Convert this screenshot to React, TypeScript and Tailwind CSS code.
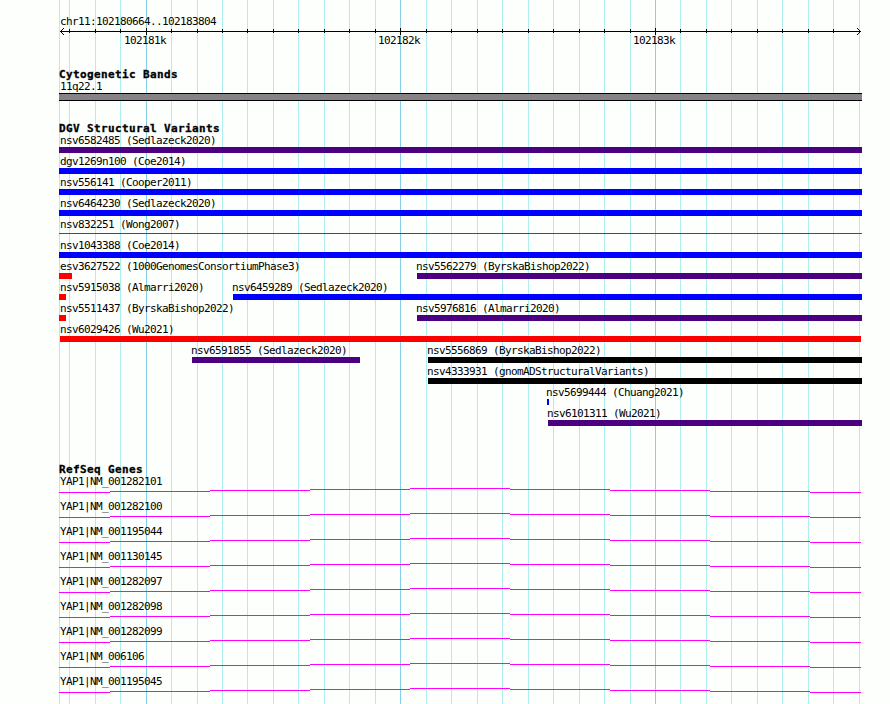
import React from "react";

const MINOR = [
  59, 69, 95, 120, 171, 197, 222, 247, 273, 298, 324, 349, 375, 426, 451, 477,
  502, 528, 553, 579, 604, 630, 680, 706, 731, 757, 782, 808, 833, 859,
];
const MAJOR = [146, 400, 655];

type Variant = { name: string; start: number; end: number; color: string; thin?: boolean };

const PURPLE = "bg-[#4b0082]";
const BLUE = "bg-[#0000ff]";
const RED = "bg-[#ff0000]";
const BLACK = "bg-[#000000]";

const ROWS: Variant[][] = [
  [{ name: "nsv6582485 (Sedlazeck2020)", start: 59, end: 862, color: PURPLE }],
  [{ name: "dgv1269n100 (Coe2014)", start: 59, end: 862, color: BLUE }],
  [{ name: "nsv556141 (Cooper2011)", start: 59, end: 862, color: BLUE }],
  [{ name: "nsv6464230 (Sedlazeck2020)", start: 59, end: 862, color: BLUE }],
  [{ name: "nsv832251 (Wong2007)", start: 59, end: 862, color: RED, thin: true }],
  [{ name: "nsv1043388 (Coe2014)", start: 59, end: 862, color: BLUE }],
  [
    { name: "esv3627522 (1000GenomesConsortiumPhase3)", start: 59, end: 72, color: RED },
    { name: "nsv5562279 (ByrskaBishop2022)", start: 417, end: 862, color: PURPLE },
  ],
  [
    { name: "nsv5915038 (Almarri2020)", start: 59, end: 66, color: RED },
    { name: "nsv6459289 (Sedlazeck2020)", start: 233, end: 862, color: BLUE },
  ],
  [
    { name: "nsv5511437 (ByrskaBishop2022)", start: 59, end: 66, color: RED },
    { name: "nsv5976816 (Almarri2020)", start: 417, end: 862, color: PURPLE },
  ],
  [{ name: "nsv6029426 (Wu2021)", start: 60, end: 861, color: RED }],
  [
    { name: "nsv6591855 (Sedlazeck2020)", start: 192, end: 360, color: PURPLE },
    { name: "nsv5556869 (ByrskaBishop2022)", start: 428, end: 862, color: BLACK },
  ],
  [{ name: "nsv4333931 (gnomADStructuralVariants)", start: 428, end: 862, color: BLACK }],
  [{ name: "nsv5699444 (Chuang2021)", start: 547, end: 549, color: BLUE }],
  [{ name: "nsv6101311 (Wu2021)", start: 548, end: 862, color: PURPLE }],
];

const GENES = [
  "NM_001282101", "NM_001282100", "NM_001195044", "NM_001130145", "NM_001282097",
  "NM_001282098", "NM_001282099", "NM_006106", "NM_001195045",
];

// Intron line: x start, x end, height above the base line
const INTRON = [
  [59, 110, 0], [110, 210, 1], [210, 310, 2], [310, 410, 3], [410, 510, 4],
  [510, 610, 3], [610, 710, 2], [710, 810, 1], [810, 861, 0],
];

function Grid() {
  return (
    <svg className="absolute inset-0" width="890" height="704" shapeRendering="crispEdges">
      {MINOR.map((x) => <rect key={x} x={x} y="0" width="1" height="704" fill="#afeeee" />)}
      {MAJOR.map((x) => <rect key={x} x={x} y="0" width="1" height="704" fill="#87ceeb" />)}
    </svg>
  );
}

function Axis() {
  return (
    <svg className="block h-[6px] overflow-visible" width="890" height="6" shapeRendering="crispEdges">
      <rect x="60" y="3" width="801" height="1" />
      {MINOR.slice(1, -1).map((x) => <rect key={x} x={x} y="1" width="1" height="4" />)}
      {MAJOR.map((x) => <rect key={x} x={x} y="0" width="1" height="7" />)}
      {[1, 2, 3].map((d) => (
        <g key={d}>
          <rect x={60 + d} y={3 - d} width="1" height="1" />
          <rect x={60 + d} y={3 + d} width="1" height="1" />
          <rect x={860 - d} y={3 - d} width="1" height="1" />
          <rect x={860 - d} y={3 + d} width="1" height="1" />
        </g>
      ))}
    </svg>
  );
}

function Title({ children }: { children: React.ReactNode }) {
  return (
    <h2 className="ml-[59px] h-3 text-[11px] leading-[13px] font-bold tracking-[0.38px] [-webkit-text-stroke:0.3px_black]">
      {children}
    </h2>
  );
}

function VariantRow({ items }: { items: Variant[] }) {
  // Each cell starts one pixel left of its bar, where its label begins.
  const origin = (v: Variant) => v.start - 1;
  return (
    <div className="flex h-[21px]">
      {items.map((v, i) => {
        const from = i === 0 ? 0 : origin(v);
        const to = items[i + 1] ? origin(items[i + 1]) : 890;
        return (
          <div key={v.name} className="shrink-0" style={{ width: to - from }}>
            <div className="h-[13px]" style={{ paddingLeft: Math.max(60, origin(v)) - from }}>
              {v.name}
            </div>
            <div
              className={`${v.color} ${v.thin ? "mt-[2px] h-px" : "h-[6px]"}`}
              style={{ marginLeft: v.start - from, width: v.end - v.start }}
            />
          </div>
        );
      })}
    </div>
  );
}

export default function App() {
  return (
    <main className="relative h-[704px] w-[890px] overflow-hidden bg-[#fcfffc] font-['DejaVu_Sans_Mono',monospace] text-[11px] leading-[13px] tracking-[-0.622px] whitespace-pre text-black">
      <Grid />
      <div className="relative flex flex-col pt-[15px]">
        <div className="ml-[60px] h-[13px]">chr11:102180664..102183804</div>
        <Axis />
        <div className="flex h-[34px] pl-[124px]">
          <span className="w-[254px]">102181k</span>
          <span className="w-[255px]">102182k</span>
          <span>102183k</span>
        </div>

        <Title>Cytogenetic Bands</Title>
        <div className="ml-[60px] h-[13px]">11q22.1</div>
        <div className="mb-[21px] ml-[59px] h-2 w-[803px] border-y border-black bg-[#868286]" />

        <Title>DGV Structural Variants</Title>
        <div className="mb-[35px]">
          {ROWS.map((items) => <VariantRow key={items[0].name} items={items} />)}
        </div>

        <Title>RefSeq Genes</Title>
        {GENES.map((g) => (
          <div key={g} className="h-[25px]">
            <div className="ml-[60px] h-[13px]">YAP1|{g}</div>
            <svg className="block" width="890" height="6" shapeRendering="crispEdges">
              {INTRON.map(([a, b, up]) => (
                <rect key={a} x={a} y={4 - up} width={b - a} height="1" fill="#ff00ff" />
              ))}
            </svg>
          </div>
        ))}
      </div>
    </main>
  );
}
